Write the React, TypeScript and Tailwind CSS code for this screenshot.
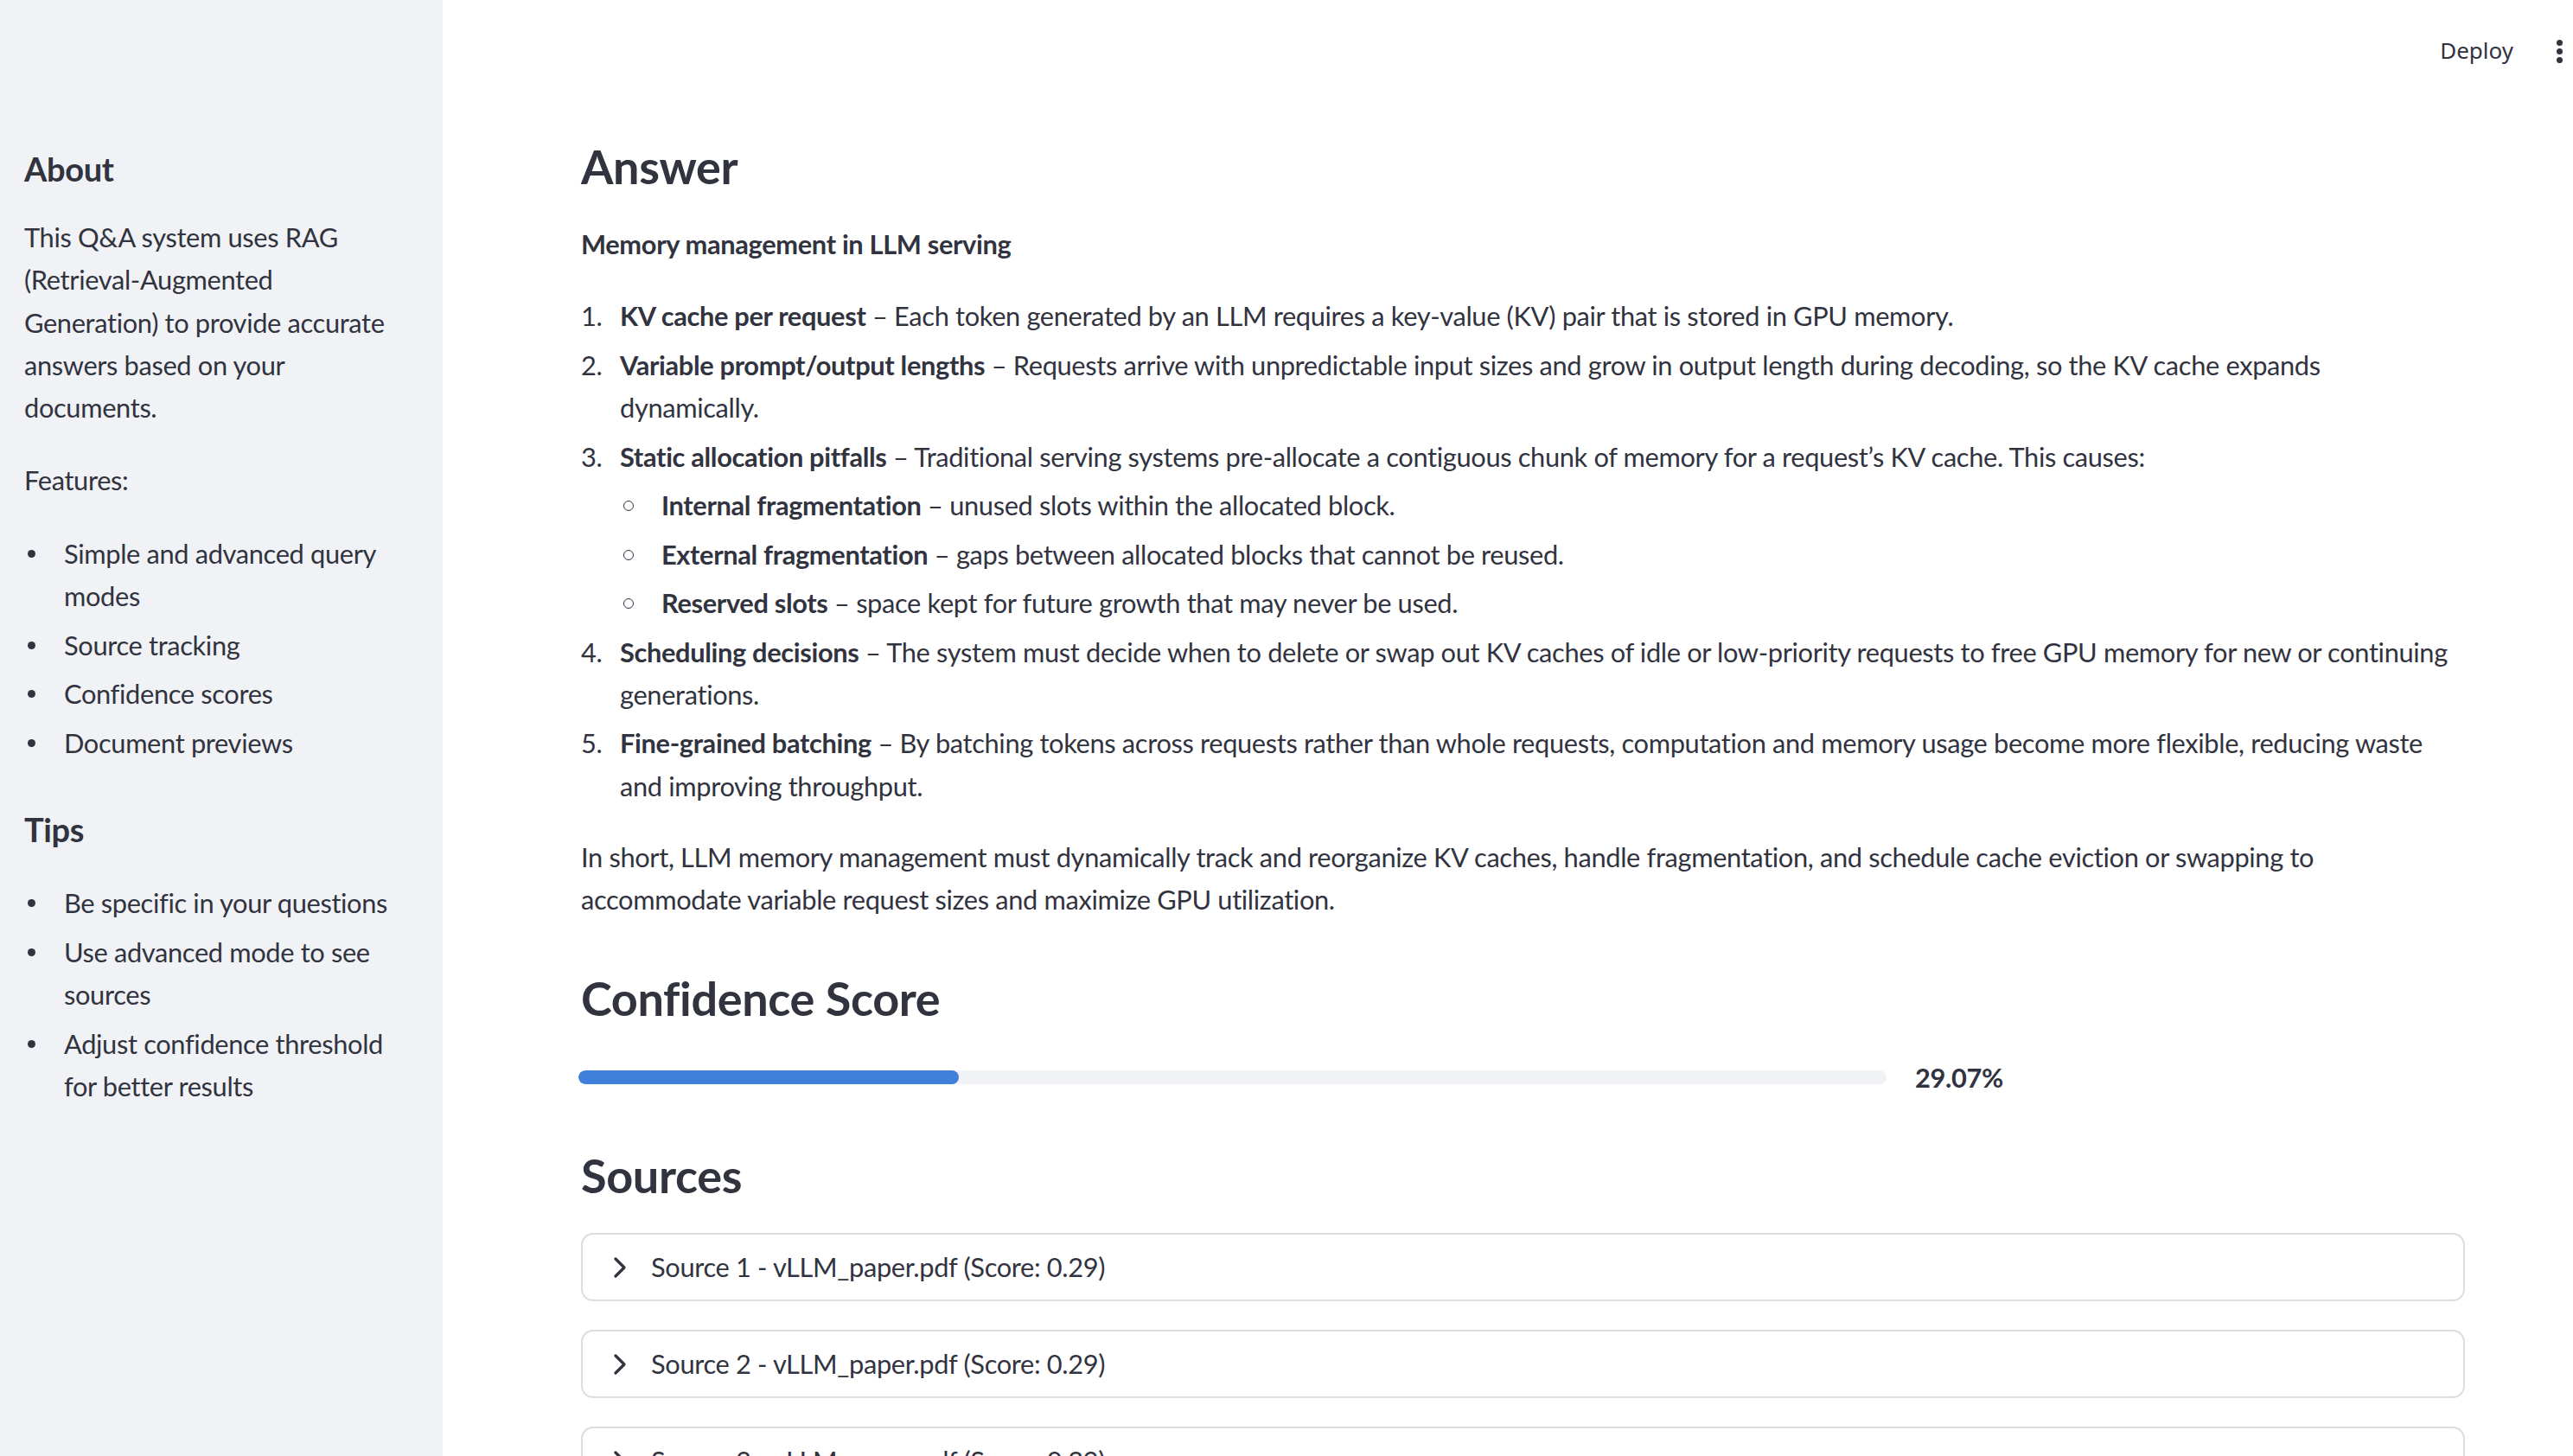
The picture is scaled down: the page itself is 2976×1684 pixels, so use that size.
import { ChevronRight } from "lucide-react";

const font = { fontFamily: "Lato, 'Noto Sans', sans-serif" };

function SideBullet({ children }: { children: React.ReactNode }) {
  return (
    <li className="flex mt-[7.4px] first:mt-0">
      <span className="w-[46px] shrink-0 flex pt-[20px] pl-[4px]">
        <span className="block w-[9px] h-[9px] rounded-full bg-[#31333f]" />
      </span>
      <span>{children}</span>
    </li>
  );
}

function Item({ n, children }: { n: number; children?: React.ReactNode }) {
  return (
    <li className="flex mt-[7.2px] first:mt-0">
      <span className="w-[45px] shrink-0">{n}.</span>
      <div className="flex-1">{children}</div>
    </li>
  );
}

function Sub({ title, text }: { title: string; text: string }) {
  return (
    <li className="flex mt-[7.2px]">
      <span className="w-[48px] shrink-0 flex pt-[19px] pl-[4px]">
        <span className="block w-[12px] h-[12px] rounded-full border-[1.5px] border-[#31333f]" />
      </span>
      <span>
        <b className="font-bold">{title}</b> – {text}
      </span>
    </li>
  );
}

function Source({ n }: { n: number }) {
  return (
    <div className="h-[79px] rounded-[14px] border-2 border-[#dcdde0] flex items-center pl-[23px] mb-[33px]">
      <ChevronRight size={40} strokeWidth={2} className="text-[#31333f] shrink-0" />
      <span className="ml-[16px]">Source {n} - vLLM_paper.pdf (Score: 0.29)</span>
    </div>
  );
}

export default function App() {
  return (
    <div
      className="w-[2976px] h-[1684px] overflow-hidden flex bg-white text-[#31333f] text-[30.8px] leading-[49.3px] tracking-[-0.35px]"
      style={font}
    >
      {/* sidebar */}
      <aside className="w-[512px] shrink-0 h-full bg-[#f0f2f6] pl-[28px] pr-[20px] pt-[172px]">
        <h3 className="text-[38px] leading-[46px] font-bold">About</h3>
        <p className="mt-[32px]">
          This Q&amp;A system uses RAG
          <br />
          (Retrieval-Augmented
          <br />
          Generation) to provide accurate
          <br />
          answers based on your
          <br />
          documents.
        </p>
        <p className="mt-[35px]">Features:</p>
        <ul className="mt-[35px]">
          <SideBullet>
            Simple and advanced query
            <br />
            modes
          </SideBullet>
          <SideBullet>Source tracking</SideBullet>
          <SideBullet>Confidence scores</SideBullet>
          <SideBullet>Document previews</SideBullet>
        </ul>
        <h3 className="mt-[52px] text-[38px] leading-[46px] font-bold">Tips</h3>
        <ul className="mt-[38px]">
          <SideBullet>Be specific in your questions</SideBullet>
          <SideBullet>
            Use advanced mode to see
            <br />
            sources
          </SideBullet>
          <SideBullet>
            Adjust confidence threshold
            <br />
            for better results
          </SideBullet>
        </ul>
      </aside>

      {/* main */}
      <main className="flex-1 min-w-0">
        <header className="h-[118px] flex items-center justify-end pr-[12px]">
          <span className="text-[26px] tracking-normal" style={{ fontFamily: "'Noto Sans', sans-serif" }}>Deploy</span>
          <span className="ml-[50px] flex flex-col gap-[3px]">
            <span className="block w-[7px] h-[7px] rounded-full bg-[#31333f]" />
            <span className="block w-[7px] h-[7px] rounded-full bg-[#31333f]" />
            <span className="block w-[7px] h-[7px] rounded-full bg-[#31333f]" />
          </span>
        </header>

        <div className="pl-[160px] pr-[110px] pt-[42px]">
          <h2 className="text-[54px] leading-[65px] font-bold">Answer</h2>
          <p className="mt-[33px] font-bold">Memory management in LLM serving</p>

          <ol className="mt-[34px]">
            <Item n={1}>
              <b className="font-bold">KV cache per request</b> – Each token generated by an LLM requires a key-value (KV) pair that is stored in GPU memory.
            </Item>
            <Item n={2}>
              <b className="font-bold">Variable prompt/output lengths</b> – Requests arrive with unpredictable input sizes and grow in output length during decoding, so the KV cache expands
              <br />
              dynamically.
            </Item>
            <Item n={3}>
              <b className="font-bold">Static allocation pitfalls</b> – Traditional serving systems pre-allocate a contiguous chunk of memory for a request’s KV cache. This causes:
              <ul>
                <Sub title="Internal fragmentation" text="unused slots within the allocated block." />
                <Sub title="External fragmentation" text="gaps between allocated blocks that cannot be reused." />
                <Sub title="Reserved slots" text="space kept for future growth that may never be used." />
              </ul>
            </Item>
            <Item n={4}>
              <b className="font-bold">Scheduling decisions</b> – The system must decide when to delete or swap out KV caches of idle or low-priority requests to free GPU memory for new or continuing
              <br />
              generations.
            </Item>
            <Item n={5}>
              <b className="font-bold">Fine-grained batching</b> – By batching tokens across requests rather than whole requests, computation and memory usage become more flexible, reducing waste
              <br />
              and improving throughput.
            </Item>
          </ol>

          <p className="mt-[33px]">
            In short, LLM memory management must dynamically track and reorganize KV caches, handle fragmentation, and schedule cache eviction or swapping to
            <br />
            accommodate variable request sizes and maximize GPU utilization.
          </p>

          <h2 className="mt-[57px] text-[54px] leading-[65px] font-bold">Confidence Score</h2>

          <div className="mt-[44px] flex items-center h-[30px]">
            <div className="w-[1513px] h-[16px] rounded-full bg-[#f0f2f6] overflow-hidden ml-[-3px]">
              <div className="h-full rounded-full bg-[#3e80da]" style={{ width: "29.1%" }} />
            </div>
            <span className="ml-[33px] font-bold">29.07%</span>
          </div>

          <h2 className="mt-[66px] text-[54px] leading-[65px] font-bold">Sources</h2>

          <div className="mt-[34px] mr-[15px]">
            <Source n={1} />
            <Source n={2} />
            <Source n={3} />
          </div>
        </div>
      </main>
    </div>
  );
}
